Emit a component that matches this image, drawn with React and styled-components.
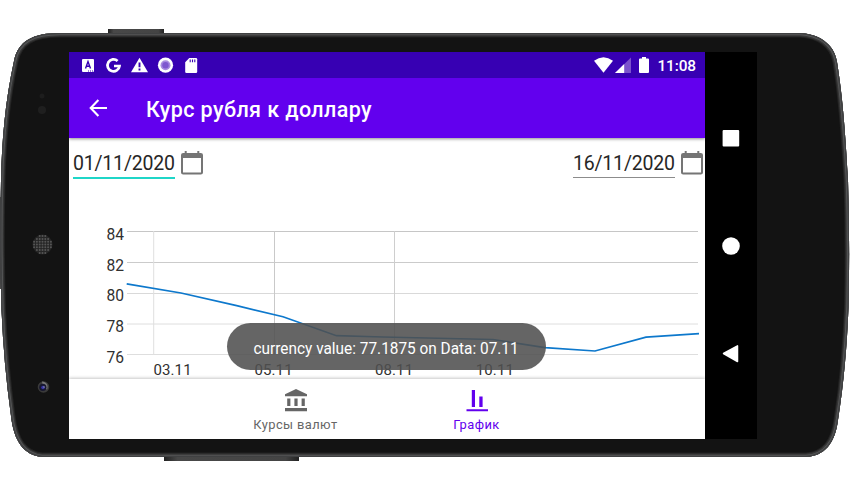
import React from "react";
import styled, { createGlobalStyle } from "styled-components";

const GlobalStyle = createGlobalStyle`
  body { margin: 0; background: #fff; font-family: Roboto, "Liberation Sans", sans-serif; overflow: hidden; }
  * { box-sizing: border-box; }
  svg { display: block; flex: none; }
`;

const Stage = styled.main`
  display: grid;
  width: 860px;
  height: 490px;
  background: #fff;
  > * { grid-area: 1 / 1; }
`;

const Device = styled.div`
  display: flex;
  width: 688px;
  height: 387px;
  margin: 52px 0 0 69px;
  z-index: 1;
`;

const Screen = styled.section`
  position: relative;
  display: flex;
  flex-direction: column;
  width: 636px;
  background: #fff;
`;

const StatusBar = styled.header`
  display: flex;
  justify-content: space-between;
  height: 26px;
  padding: 0 9px 0 12px;
  background: #3700b3;
`;

const StatusGroup = styled.div`
  display: flex;
  align-items: center;
  gap: ${(p) => p.$gap}px;
`;

const Clock = styled.time`
  color: #fff;
  font-size: 15.4px;
  font-weight: 500;
  line-height: 26px;
  letter-spacing: -0.1px;
  padding: 1px 0 0 2px;
`;

const Toolbar = styled.div`
  display: flex;
  align-items: center;
  gap: 38px;
  height: 60px;
  flex: none;
  padding: 0 20px;
  background: #6200ee;
  box-shadow: 0 1px 3px rgba(0, 0, 0, 0.45);
  clip-path: inset(0 0 -6px 0);
`;

const Title = styled.h1`
  margin: 2px 0 0;
  color: #fff;
  font-size: 21.5px;
  font-weight: 500;
  letter-spacing: 0.4px;
`;

const DateRow = styled.div`
  display: flex;
  justify-content: space-between;
  height: 62px;
  flex: none;
  padding: 12px 2px 0 4px;
`;

const DateField = styled.div`
  display: flex;
  gap: 6px;
`;

const DateInput = styled.div`
  width: 102px;
  height: ${(p) => (p.$focused ? 29 : 28)}px;
  border-bottom: ${(p) => (p.$focused ? "2px solid #1fd6c8" : "1px solid #8c8c8c")};
  color: #262626;
  font-size: 19.5px;
  line-height: 28px;
  white-space: nowrap;
  letter-spacing: -0.2px;
`;

const ChartArea = styled.div`
  height: 179px;
  flex: none;
  overflow: hidden;
`;

const ChartLabel = styled.text`
  fill: #303030;
  font-family: Roboto, sans-serif;
  font-size: ${(p) => p.$size}px;
  letter-spacing: ${(p) => p.$spacing || 0}px;
`;

const BottomNav = styled.nav`
  display: flex;
  justify-content: center;
  flex: 1;
  padding-right: 2px;
  background: #fff;
  box-shadow: 0 -1px 3px rgba(0, 0, 0, 0.22);
  clip-path: inset(-5px 0 0 0);
`;

const NavItem = styled.div`
  display: flex;
  flex-direction: column;
  align-items: center;
  width: 181px;
  padding-top: 8px;
  color: ${(p) => (p.$active ? "#6200ee" : "#666")};
`;

const NavLabel = styled.span`
  margin-top: 4px;
  font-size: 12.9px;
  line-height: 18px;
  letter-spacing: 0.4px;
`;

const Toast = styled.div`
  position: absolute;
  left: 158px;
  top: 271px;
  display: flex;
  align-items: center;
  justify-content: center;
  width: 319px;
  height: 47px;
  border-radius: 24px;
  background: rgba(80, 80, 80, 0.88);
  color: #fff;
`;

const ToastText = styled.span`
  font-size: 17.2px;
  line-height: 22px;
  white-space: nowrap;
  transform: scaleX(0.895);
  padding-top: 3px;
`;

const SystemNav = styled.aside`
  display: flex;
  flex-direction: column;
  align-items: center;
  width: 52px;
  padding-top: 77px;
  gap: 90px;
  background: #000;
`;

const BODY =
  "M60 33 H800 C818 34 834 43 837 62 C842 93 845 125 848 180 Q850 245 848.5 307 C847 345 844 382 838 420 C835 444 824 456 806 457 H42 C24 455 14 442 11 416 C6 380 3 345 1.5 310 Q-.5 245 1 180 C2 140 5 102 14 61 C18 41 33 33 60 33Z";

function PhoneBody() {
  const holes = [];
  for (let y = -3; y <= 3; y++)
    for (let x = -3; x <= 3; x++)
      if (x * x + y * y < 12)
        holes.push(<circle key={`${x},${y}`} cx={42.5 + x * 2.8} cy={244.5 + y * 2.8} r="1" fill="#555" />);
  return (
    <svg width="860" height="490" viewBox="0 0 860 490">
      <defs>
        <clipPath id="body"><path d={BODY} /></clipPath>
        <linearGradient id="key" x1="0" x2="1">
          <stop offset="0" stopColor="#222" /><stop offset=".1" stopColor="#484848" />
          <stop offset=".9" stopColor="#444" /><stop offset="1" stopColor="#222" />
        </linearGradient>
      </defs>
      <rect x="108" y="29" width="56" height="6" fill="url(#key)" />
      <rect x="164" y="455" width="135" height="6" fill="url(#key)" />
      <rect x="0" y="197" width="3" height="92" fill="#555" />
      <g clipPath="url(#body)" fill="none">
        <path d={BODY} fill="#131313" />
        <path d={BODY} stroke="#222" strokeWidth="9" />
        <path d={BODY} stroke="#353535" strokeWidth="7" />
        <path d={BODY} stroke="#545556" strokeWidth="4.500" />
        <path d={BODY} stroke="#404142" strokeWidth="2.600" />
      </g>
      <circle cx="42" cy="96" r="2.5" fill="#1d1d1d" />
      <circle cx="42" cy="110" r="4" fill="#1f1f1f" />
      <circle cx="42.5" cy="244.5" r="10" fill="#262626" />
      {holes}
      <circle cx="43.5" cy="387" r="5.8" fill="#3a3a3a" />
      <path d="M42 381.5a5.5 5.5 0 0 1 5 8l-4-2z" fill="#777" />
      <circle cx="42.8" cy="387.3" r="3.6" fill="#17172e" />
      <circle cx="43" cy="387.5" r="1.8" fill="#3735a5" />
      <circle cx="44" cy="387" r=".7" fill="#aaa" />
    </svg>
  );
}

function NotificationIcons() {
  return (
    <svg width="122" height="26" viewBox="81 52 122 26" fill="#fff">
      <rect x="82" y="59" width="12" height="13" rx="1" />
      <path d="M85.500 68.500l2.500-7 2.500 7M86.300 66.300h3.400" fill="none" stroke="#3700b3" strokeWidth="1.4" />
      <path d="M88 71h1m1 0h1m1 0h1" stroke="#3700b3" strokeWidth="1" />
      <path d="M117.600 60.900A6 6 0 1 0 119.500 66h-5.500" fill="none" stroke="#fff" strokeWidth="2.700" />
      <path d="M139.5 57.7L148 72.3h-17z" />
      <path d="M139.5 62.5v4.8M139.5 68.5v2" stroke="#3700b3" strokeWidth="1.9" />
      <circle cx="165.5" cy="65.2" r="7.6" />
      <circle cx="165.5" cy="65.2" r="5" fill="#a88be0" />
      <circle cx="165.5" cy="65.2" r="3.2" fill="#7e57cf" />
      <path d="M189.3 58h6.6a1.3 1.3 0 0 1 1.3 1.3v12.4a1.3 1.3 0 0 1-1.3 1.3h-9.4a1.3 1.3 0 0 1-1.3-1.3v-9.4z" />
      <path d="M190.2 59.5v2.7M192.5 59.5v2.7M194.8 59.5v2.7" stroke="#3700b3" strokeWidth="1.1" />
    </svg>
  );
}

function SystemIcons() {
  return (
    <svg width="58" height="26" viewBox="594 52 58 26" fill="#fff">
      <path d="M595 60.7Q604.5 53.7 614 60.7L604.5 72.8z" />
      <path d="M632 57.5V73h-16z" fill="#7b52cc" />
      <path d="M625.2 64V73H616z" />
      <path d="M643 57h4v1.5h2q1 0 1 1v12.6q0 1-1 1h-8q-1 0-1-1V59.5q0-1 1-1h2z" />
    </svg>
  );
}

function BackIcon() {
  return (
    <svg width="19" height="18" viewBox="0 0 19 18" fill="none" stroke="#fff" strokeWidth="2.1">
      <path d="M9.4 1L1.7 9l7.7 8M1.7 9H18" />
    </svg>
  );
}

function CalendarIcon() {
  return (
    <svg width="22" height="26" viewBox="0 0 22 26">
      <path d="M2.200 3h1.500V1h2v2h10.600V1h2v2h1.500Q22 3 22 5v17.400q0 2-2.200 2H2.200Q0 24.400 0 22.400V5Q0 3 2.200 3zM2 8v14.500h18V8z" fill="#757575" fillRule="evenodd" />
    </svg>
  );
}

function BankIcon() {
  return (
    <svg width="24" height="25" viewBox="284 387 24 25" fill="#666">
      <path d="M296 389l11 5.200v2h-22v-2zM287.200 398.600h3.200v7.500h-3.200zM294.400 398.600h3.200v7.500h-3.200zM301.600 398.600h3.200v7.500h-3.200zM285 408h22v3.200h-22z" />
    </svg>
  );
}

function ChartIcon() {
  return (
    <svg width="24" height="25" viewBox="465 387 24 25" fill="#6200ee">
      <path d="M471.800 390h3.200v17h-3.200zM479.300 396.500h3.300v10.500h-3.300zM466.500 409.300h21.500v2h-21.500z" />
    </svg>
  );
}

const LEVELS = [
  [84, 231.5, 240, "#c6c6c6"],
  [82, 262.5, 270.500, "#cbcbcb"],
  [80, 293.5, 301.300, "#d9d9d9"],
  [78, 324, 332, "#dedede"],
  [76, 354.500, 362.500, "#dedede"],
];
const DAYS = [["03.11", 153.5], ["05.11", 254.5], ["08.11", 375], ["10.11", 475.8]];
const COLUMNS = [[153.700, "#dfdfdf"], [274.500, "#c9c9c9"], [394.500, "#cecece"]];

function RateChart() {
  return (
    <svg width="636" height="179" viewBox="69 200 636 179">
      {LEVELS.map(([value, y, base, color]) => (
        <g key={value}>
          <path d={`M127 ${y}H698`} stroke={color} />
          <ChartLabel $size={15.600} x="106.5" y={base}>{value}</ChartLabel>
        </g>
      ))}
      {COLUMNS.map(([x, color]) => <path key={x} d={`M${x} 231V355`} stroke={color} />)}
      {DAYS.map(([day, x]) => (
        <ChartLabel key={day} $size={15} $spacing={0.1} x={x} y="374.800">{day}</ChartLabel>
      ))}
      <path
        d="M126.700 283.800L181 293L236.700 305.700L283 316.700L336.500 335.700L383 337L493 339.500L545 347.700L595 351L646 337.200L699 333.700"
        fill="none" stroke="#0d78cc" strokeWidth="1.700"
      />
    </svg>
  );
}

export default function App() {
  return (
    <Stage>
      <GlobalStyle />
      <PhoneBody />
      <Device>
        <Screen>
          <StatusBar>
            <NotificationIcons />
            <StatusGroup $gap={4}>
              <SystemIcons />
              <Clock>11:08</Clock>
            </StatusGroup>
          </StatusBar>
          <Toolbar>
            <BackIcon />
            <Title>Курс рубля к доллару</Title>
          </Toolbar>
          <DateRow>
            <DateField>
              <DateInput $focused>01/11/2020</DateInput>
              <CalendarIcon />
            </DateField>
            <DateField>
              <DateInput>16/11/2020</DateInput>
              <CalendarIcon />
            </DateField>
          </DateRow>
          <ChartArea><RateChart /></ChartArea>
          <BottomNav>
            <NavItem>
              <BankIcon />
              <NavLabel>Курсы валют</NavLabel>
            </NavItem>
            <NavItem $active>
              <ChartIcon />
              <NavLabel>График</NavLabel>
            </NavItem>
          </BottomNav>
          <Toast><ToastText>currency value: 77.1875 on Data: 07.11</ToastText></Toast>
        </Screen>
        <SystemNav>
          <svg width="18" height="18"><rect x=".6" y="1" width="16.600" height="16.500" rx="1" fill="#fff" /></svg>
          <svg width="18" height="18"><circle cx="9" cy="9" r="8.800" fill="#fff" /></svg>
          <svg width="18" height="20"><path d="M1.500 8.500L15.500 .8V16.500z" fill="#fff" stroke="#fff" strokeWidth="1.500" strokeLinejoin="round" /></svg>
        </SystemNav>
      </Device>
    </Stage>
  );
}
